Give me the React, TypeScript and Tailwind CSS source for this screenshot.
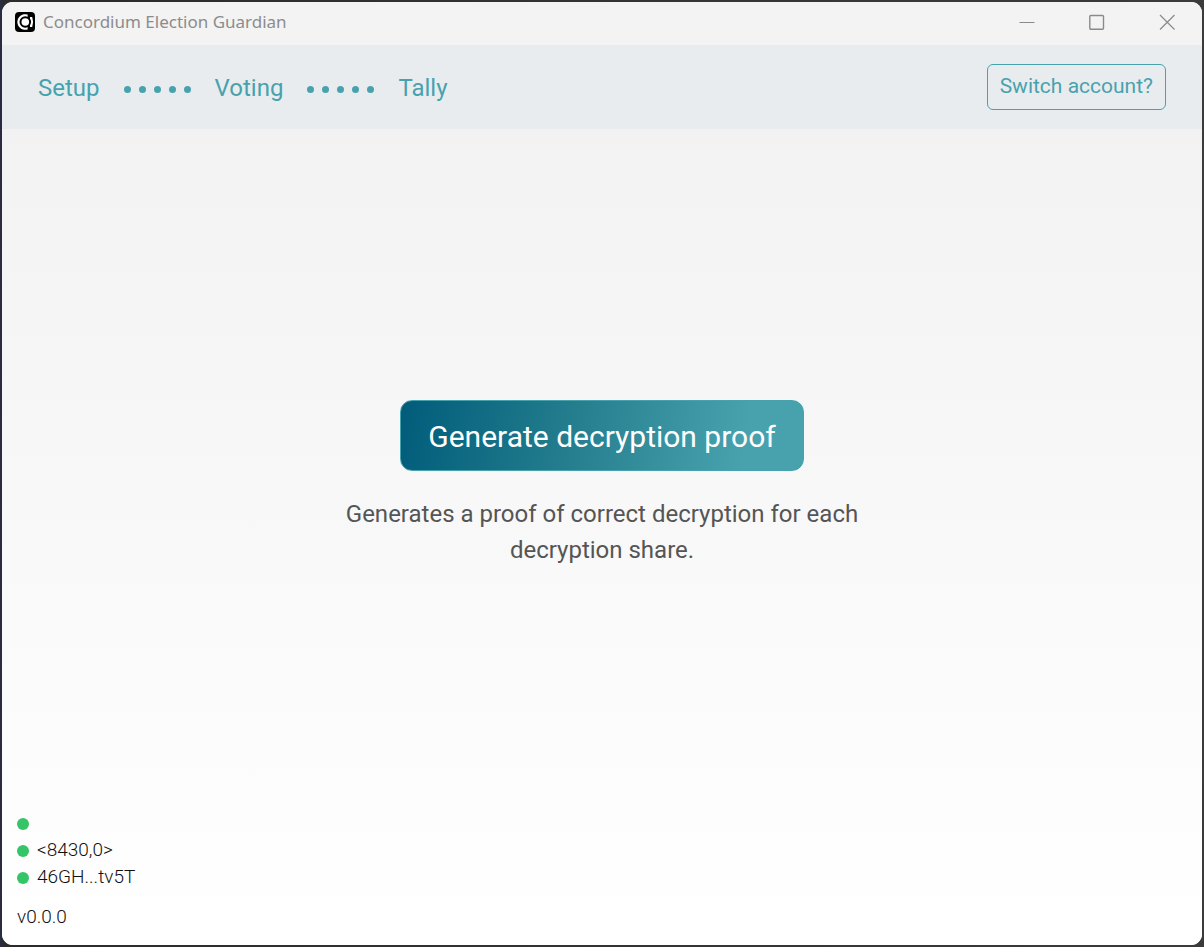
import type { ReactNode } from "react";

function AppLogo() {
  return (
    <svg viewBox="0 0 20 20" className="size-5" aria-hidden="true">
      <rect width="20" height="20" rx="4" fill="#000" />
      <path d="M12.6 2.6A7.8 7.8 0 1 0 12.6 17.4V2.6z" fill="#fff" />
      <path d="M15 5h2.2q1.8 5 0 10H15z" fill="#fff" />
      <circle cx="10.3" cy="10" r="5.8" fill="#000" />
      <circle cx="10.3" cy="10" r="3.8" fill="#fff" />
    </svg>
  );
}

function WindowButton({ label, children }: { label: string; children: ReactNode }) {
  return (
    <button type="button" aria-label={label} className="flex h-full w-[70px] items-center justify-center">
      <svg viewBox="0 0 16 16" className="size-4" fill="none" stroke="#8a8a8a" strokeWidth="1.2" aria-hidden="true">
        {children}
      </svg>
    </button>
  );
}

function TitleBar() {
  return (
    <header className="flex h-[43px] shrink-0 items-center bg-[#f3f3f3] pb-[3px] pl-[13px]">
      <AppLogo />
      <h1 className="ml-2 font-['Noto_Sans',sans-serif] text-[17px] text-[#8c8c8c]">Concordium Election Guardian</h1>
      <div className="ml-auto flex h-full">
        <WindowButton label="Minimize">
          <path d="M0.5 8.5h15" />
        </WindowButton>
        <WindowButton label="Maximize">
          <rect x="0.8" y="1.5" width="13.7" height="13.7" rx="1" strokeWidth="1.4" />
        </WindowButton>
        <WindowButton label="Close">
          <path d="M1 1l14.5 14.5M15.5 1L1 15.5" />
        </WindowButton>
      </div>
    </header>
  );
}

function Dots() {
  return (
    <span className="flex gap-2 pt-[2px]" aria-hidden="true">
      {[0, 1, 2, 3, 4].map((dot) => (
        <span key={dot} className="size-[7px] rounded-full bg-[#48a2ae]" />
      ))}
    </span>
  );
}

function NavBar() {
  return (
    <nav className="flex h-[84px] shrink-0 items-center justify-between bg-[#e8ecef] px-9 text-[#48a2ae]">
      <div className="flex items-center gap-6 pt-[2px] text-2xl">
        <a href="#setup">Setup</a>
        <Dots />
        <a href="#voting">Voting</a>
        <Dots />
        <a href="#tally">Tally</a>
      </div>
      <button type="button" className="h-[46px] rounded-md border border-[#48a2ae] px-3 text-[21px]">
        Switch account?
      </button>
    </nav>
  );
}

function Status({ children }: { children?: ReactNode }) {
  return (
    <li className="flex h-[27px] items-center gap-2">
      <span className="size-3 rounded-full bg-[#35c467]" />
      {children}
    </li>
  );
}

export default function App() {
  return (
    <div className="flex min-h-screen bg-[linear-gradient(90deg,#2a2c44,#2b2b2b_4px,#3b3b3b)] p-[2px] font-['Roboto',sans-serif]">
      <div className="flex grow flex-col overflow-hidden rounded-[11px] bg-white">
        <TitleBar />
        <NavBar />
        <main className="flex grow flex-col bg-linear-to-b from-[#f2f2f2] to-white">
          <section className="flex grow flex-col items-center justify-end pb-[242px] text-center">
            <button
              type="button"
              className="h-[71px] rounded-xl border border-[#48a2ae] bg-[linear-gradient(100deg,#005c7a,#26808f_45%,#48a2ae_85%)] px-[27px] pt-[2px] text-[30px] text-white"
            >
              Generate decryption proof
            </button>
            <p className="mt-[25px] max-w-[540px] text-2xl leading-9 text-[#555]">
              Generates a proof of correct decryption for each decryption share.
            </p>
          </section>
          <footer className="px-[15px] pb-[15px] text-[19px] font-light text-[#111]">
            <ul>
              <Status />
              <Status>&lt;8430,0&gt;</Status>
              <Status>46GH...tv5T</Status>
            </ul>
            <p className="mt-3 leading-[27px]">v0.0.0</p>
          </footer>
        </main>
      </div>
    </div>
  );
}
